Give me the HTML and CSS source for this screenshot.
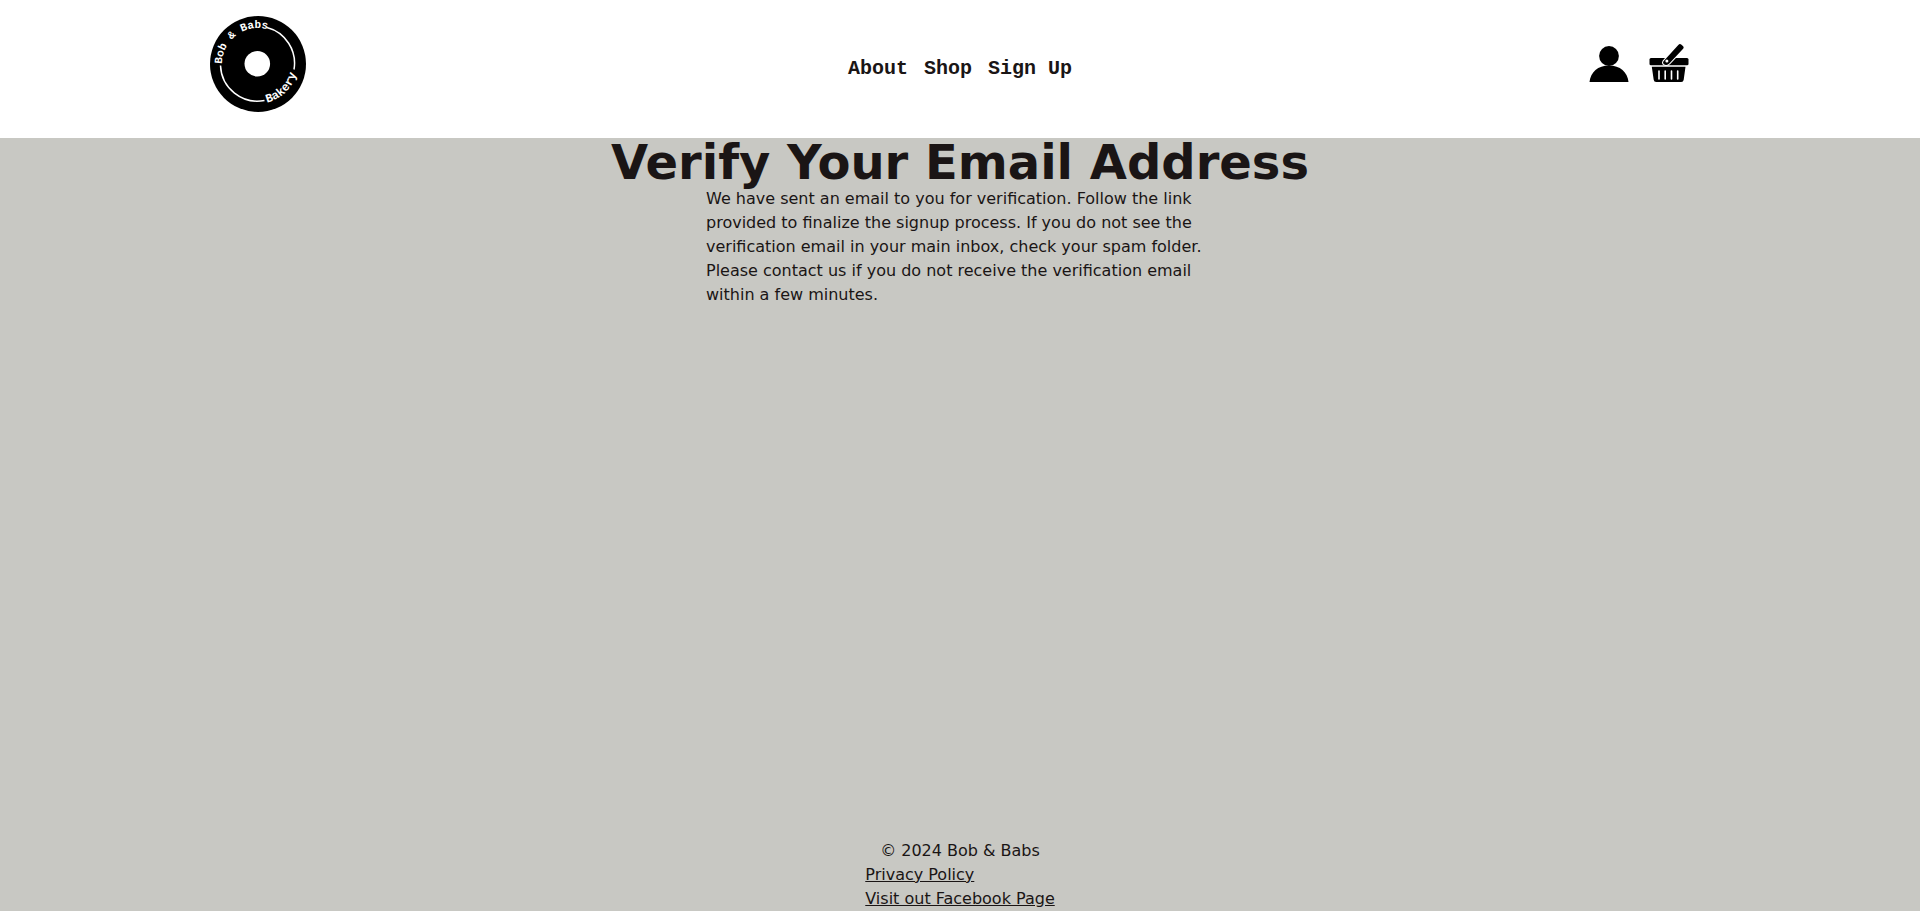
FILE: index.html
```html
<!DOCTYPE html>
<html lang="en">
<head>
<meta charset="utf-8">
<meta name="viewport" content="width=device-width, initial-scale=1">
<title>Verify Your Email Address</title>
<link rel="stylesheet" href="styles.css">
</head>
<body>
<header class="header">
  <a class="logo" href="#" aria-label="Home">
    <svg class="logo-art" viewBox="0 0 96 96">
      <defs>
        <path id="arc-top" d="M12 48a36 36 0 0 1 72 0"/>
        <path id="arc-bottom" d="M48 87.500A39.500 39.500 0 0 0 87.500 48"/>
      </defs>
      <circle cx="48" cy="48" r="48"/>
      <circle cx="47.3" cy="47.8" r="12.800" fill="#fff"/>
      <path d="M57 11.500A37 37 0 0 1 84 53.500M54.500 84.400A37 37 0 0 1 10.500 49.500" fill="none" stroke="#fff" stroke-width="1.500"/>
      <text class="logo-text"><textPath href="#arc-top">Bob &amp; Babs</textPath></text>
      <text class="logo-text logo-text-large"><textPath href="#arc-bottom" startOffset="9">Bakery</textPath></text>
    </svg>
  </a>
  <nav class="nav">
    <a href="#">About</a>
    <a href="#">Shop</a>
    <a href="#">Sign Up</a>
  </nav>
  <div class="actions">
    <a href="#" aria-label="Account">
      <svg class="icon" viewBox="0 1 40 40"><circle cx="20" cy="13" r="9.900"/><path d="M.5 39C1.500 29 9 22.400 20 22.400S38.500 29 39.500 39z"/></svg>
    </a>
    <a href="#" aria-label="Basket">
      <svg class="icon" viewBox="0 1 40 40">
        <path d="M2 15h36q1.500 0 1.500 1.500V21q0 1.300-1.500 1.300H2Q.5 22.300.5 21v-4.500Q.5 15 2 15z"/>
        <path d="M2.800 23.700h33.700l-1.800 13q-.3 2.300-2.500 2.300H7.200q-2.200 0-2.500-2.300z"/>
        <path d="M10 28v8M16.200 28v8M22.500 28v8M28.700 28v8" stroke="#fff" stroke-width="1.600" stroke-linecap="round"/>
        <path d="M14.500 18.200 29.300 1.900q1.500-1.600 3.200-.2l1.400 1.300q1.500 1.500 0 3.100L20.300 20.500q-1.300 1.700-3.500 1.400-2.800-.5-2.800-2.500z" stroke="#fff" stroke-width="2"/>
        <path d="M14.500 18.200 29.300 1.900q1.500-1.600 3.200-.2l1.400 1.300q1.500 1.500 0 3.100L20.300 20.500q-1.300 1.700-3.500 1.400-2.800-.5-2.800-2.500z"/>
        <circle cx="17.900" cy="17.900" r="1.500" fill="#fff"/>
      </svg>
    </a>
  </div>
</header>
<main class="main">
  <h1 class="title">Verify Your Email Address</h1>
  <p class="message">We have sent an email to you for verification. Follow the link provided to finalize the signup process. If you do not see the verification email in your main inbox, check your spam folder. Please contact us if you do not receive the verification email within a few minutes.</p>
</main>
<footer class="footer">
  <div class="footer-content">
    <p class="copyright">© 2024 Bob &amp; Babs</p>
    <a href="#">Privacy Policy</a>
    <a href="#">Visit out Facebook Page</a>
  </div>
</footer>
</body>
</html>
```
FILE: styles.css
```css
* {
  box-sizing: border-box;
}

body {
  display: flex;
  flex-direction: column;
  min-height: 100vh;
  margin: 0;
  background: #c8c8c3;
  color: #1a1515;
  font: 16px/24px Verdana, "DejaVu Sans", sans-serif;
}

a {
  color: inherit;
}

.header {
  display: grid;
  grid-template-columns: 1fr auto 1fr;
  align-items: center;
  padding: 16px 210px 26px;
  background: #fff;
}

.logo {
  justify-self: start;
}

.logo-art,
.icon {
  display: block;
}

.logo-art {
  width: 96px;
  height: 96px;
}

.logo-text {
  fill: #fff;
  font: bold 11px "Courier New", "Liberation Mono", monospace;
}

.logo-text-large {
  font-size: 12px;
}

.nav {
  display: flex;
  gap: 16px;
  padding-top: 10px;
  font: bold 20px/24px "Courier New", "Liberation Mono", monospace;
}

.nav a {
  text-decoration: none;
}

.actions {
  display: flex;
  justify-self: end;
  gap: 20px;
  padding-right: 21px;
}

.icon {
  width: 40px;
  height: 40px;
}

.main {
  flex: 1;
}

.title {
  margin: 0;
  font-size: 48px;
  line-height: 49px;
  text-align: center;
}

.message {
  max-width: 508px;
  margin: 0 auto;
}

.footer {
  display: flex;
  justify-content: center;
}

.footer-content {
  display: flex;
  flex-direction: column;
  align-items: flex-start;
}

.copyright {
  align-self: center;
  margin: 0;
}
```
